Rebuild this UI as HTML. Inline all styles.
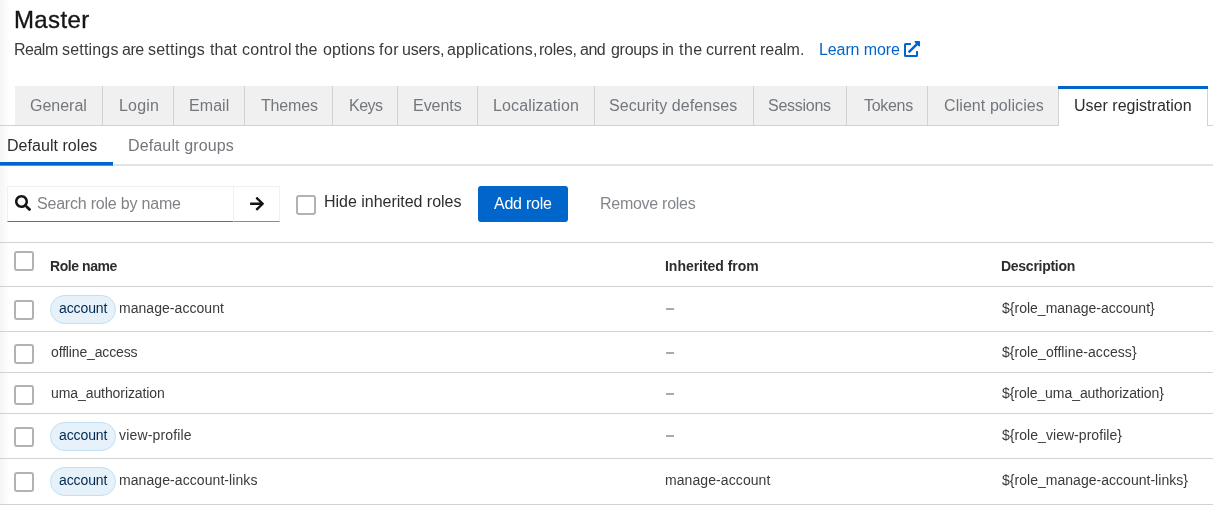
<!DOCTYPE html>
<html><head><meta charset="utf-8"><style>
html,body{margin:0;padding:0;width:1213px;height:505px;overflow:hidden;background:#fff;position:relative}
.t{position:absolute;font-family:"Liberation Sans", sans-serif;line-height:1;white-space:pre;will-change:transform}
.b{position:absolute}
</style></head><body>

<div class="b" style="left:0px;top:0px;width:10px;height:505px;background:linear-gradient(to right,rgba(0,0,0,0.04),rgba(0,0,0,0))"></div>
<div class="t" style="left:14.02px;top:7.58px;font-size:24px;color:#151515;font-weight:400;letter-spacing:0.356px;-webkit-text-stroke:0.35px #151515">Master</div>
<div class="t" style="left:14.10px;top:42.06px;font-size:16px;color:#3a3a3a;font-weight:400;letter-spacing:-0.500px;">Realm</div>
<div class="t" style="left:62.01px;top:42.06px;font-size:16px;color:#3a3a3a;font-weight:400;letter-spacing:0.184px;">settings</div>
<div class="t" style="left:122.17px;top:42.06px;font-size:16px;color:#3a3a3a;font-weight:400;letter-spacing:-0.500px;">are</div>
<div class="t" style="left:148.11px;top:42.06px;font-size:16px;color:#3a3a3a;font-weight:400;letter-spacing:0.213px;">settings</div>
<div class="t" style="left:209.93px;top:42.06px;font-size:16px;color:#3a3a3a;font-weight:400;letter-spacing:0.056px;">that</div>
<div class="t" style="left:242.25px;top:42.06px;font-size:16px;color:#3a3a3a;font-weight:400;letter-spacing:0.242px;">control</div>
<div class="t" style="left:295.33px;top:42.06px;font-size:16px;color:#3a3a3a;font-weight:400;letter-spacing:0.094px;">the</div>
<div class="t" style="left:322.65px;top:42.06px;font-size:16px;color:#3a3a3a;font-weight:400;letter-spacing:0.059px;">options</div>
<div class="t" style="left:378.65px;top:42.06px;font-size:16px;color:#3a3a3a;font-weight:400;letter-spacing:0.433px;">for</div>
<div class="t" style="left:402.30px;top:42.06px;font-size:16px;color:#3a3a3a;font-weight:400;letter-spacing:-0.248px;">users,</div>
<div class="t" style="left:447.42px;top:42.06px;font-size:16px;color:#3a3a3a;font-weight:400;letter-spacing:0.123px;">applications,</div>
<div class="t" style="left:538.80px;top:42.06px;font-size:16px;color:#3a3a3a;font-weight:400;letter-spacing:-0.240px;">roles,</div>
<div class="t" style="left:579.71px;top:42.06px;font-size:16px;color:#3a3a3a;font-weight:400;letter-spacing:-0.500px;">and</div>
<div class="t" style="left:610.69px;top:42.06px;font-size:16px;color:#3a3a3a;font-weight:400;letter-spacing:-0.298px;">groups</div>
<div class="t" style="left:662.15px;top:42.06px;font-size:16px;color:#3a3a3a;font-weight:400;letter-spacing:-0.500px;">in</div>
<div class="t" style="left:678.53px;top:42.06px;font-size:16px;color:#3a3a3a;font-weight:400;letter-spacing:0.444px;">the</div>
<div class="t" style="left:705.75px;top:42.06px;font-size:16px;color:#3a3a3a;font-weight:400;letter-spacing:0.009px;">current</div>
<div class="t" style="left:759.70px;top:42.06px;font-size:16px;color:#3a3a3a;font-weight:400;letter-spacing:-0.020px;">realm.</div>
<div class="t" style="left:818.60px;top:42.46px;font-size:16px;color:#06c;font-weight:400;letter-spacing:-0.100px;">Learn more</div>
<svg class="b" style="left:904px;top:41px" width="16" height="16" viewBox="0 0 512 512"><path fill="#06c" d="M432 320h-32a16 16 0 0 0-16 16v112H64V128h144a16 16 0 0 0 16-16V80a16 16 0 0 0-16-16H48A48 48 0 0 0 0 112v352a48 48 0 0 0 48 48h352a48 48 0 0 0 48-48V336a16 16 0 0 0-16-16zM488 0H360c-21.37 0-32.05 25.91-17 41l35.73 35.73L135 320.37a24 24 0 0 0 0 34L157.67 377a24 24 0 0 0 34 0l243.61-243.68L471 169c15 15 41 4.5 41-17V24a24 24 0 0 0-24-24z"/></svg>
<div class="b" style="left:0px;top:125px;width:1213px;height:1px;background:#d2d2d2"></div>
<div class="b" style="left:15px;top:86px;width:87px;height:39px;background:#f0f0f0"></div>
<div class="t" style="left:30.11px;top:97.96px;font-size:16px;color:#73777c;font-weight:400;letter-spacing:-0.018px;">General</div>
<div class="b" style="left:102px;top:86px;width:71px;height:39px;background:#f0f0f0"></div>
<div class="b" style="left:102px;top:86px;width:1px;height:39px;background:#d2d2d2"></div>
<div class="t" style="left:118.50px;top:97.96px;font-size:16px;color:#73777c;font-weight:400;letter-spacing:0.176px;">Login</div>
<div class="b" style="left:173px;top:86px;width:71px;height:39px;background:#f0f0f0"></div>
<div class="b" style="left:173px;top:86px;width:1px;height:39px;background:#d2d2d2"></div>
<div class="t" style="left:189.30px;top:97.96px;font-size:16px;color:#73777c;font-weight:400;letter-spacing:0.075px;">Email</div>
<div class="b" style="left:244px;top:86px;width:88px;height:39px;background:#f0f0f0"></div>
<div class="b" style="left:244px;top:86px;width:1px;height:39px;background:#d2d2d2"></div>
<div class="t" style="left:261.39px;top:97.96px;font-size:16px;color:#73777c;font-weight:400;letter-spacing:-0.178px;">Themes</div>
<div class="b" style="left:332px;top:86px;width:65px;height:39px;background:#f0f0f0"></div>
<div class="b" style="left:332px;top:86px;width:1px;height:39px;background:#d2d2d2"></div>
<div class="t" style="left:349.10px;top:97.96px;font-size:16px;color:#73777c;font-weight:400;letter-spacing:-0.500px;">Keys</div>
<div class="b" style="left:397px;top:86px;width:80px;height:39px;background:#f0f0f0"></div>
<div class="b" style="left:397px;top:86px;width:1px;height:39px;background:#d2d2d2"></div>
<div class="t" style="left:413.00px;top:97.96px;font-size:16px;color:#73777c;font-weight:400;letter-spacing:-0.041px;">Events</div>
<div class="b" style="left:477px;top:86px;width:117px;height:39px;background:#f0f0f0"></div>
<div class="b" style="left:477px;top:86px;width:1px;height:39px;background:#d2d2d2"></div>
<div class="t" style="left:492.70px;top:97.96px;font-size:16px;color:#73777c;font-weight:400;letter-spacing:0.136px;">Localization</div>
<div class="b" style="left:594px;top:86px;width:159px;height:39px;background:#f0f0f0"></div>
<div class="b" style="left:594px;top:86px;width:1px;height:39px;background:#d2d2d2"></div>
<div class="t" style="left:609.10px;top:97.96px;font-size:16px;color:#73777c;font-weight:400;letter-spacing:0.062px;">Security defenses</div>
<div class="b" style="left:753px;top:86px;width:93px;height:39px;background:#f0f0f0"></div>
<div class="b" style="left:753px;top:86px;width:1px;height:39px;background:#d2d2d2"></div>
<div class="t" style="left:768.10px;top:97.96px;font-size:16px;color:#73777c;font-weight:400;letter-spacing:-0.258px;">Sessions</div>
<div class="b" style="left:846px;top:86px;width:81px;height:39px;background:#f0f0f0"></div>
<div class="b" style="left:846px;top:86px;width:1px;height:39px;background:#d2d2d2"></div>
<div class="t" style="left:863.79px;top:97.96px;font-size:16px;color:#73777c;font-weight:400;letter-spacing:-0.298px;">Tokens</div>
<div class="b" style="left:927px;top:86px;width:131px;height:39px;background:#f0f0f0"></div>
<div class="b" style="left:927px;top:86px;width:1px;height:39px;background:#d2d2d2"></div>
<div class="t" style="left:943.90px;top:97.96px;font-size:16px;color:#73777c;font-weight:400;letter-spacing:0.078px;">Client policies</div>
<div class="b" style="left:1058px;top:86px;width:1px;height:40px;background:#d2d2d2"></div>
<div class="b" style="left:1059px;top:86px;width:149px;height:40px;background:#fff;border-right:1px solid #d2d2d2;box-sizing:border-box"></div>
<div class="b" style="left:1058px;top:86px;width:150px;height:3px;background:#06c"></div>
<div class="t" style="left:1074.20px;top:97.96px;font-size:16px;color:#2d2d2d;font-weight:400;letter-spacing:0.019px;">User registration</div>
<div class="b" style="left:0px;top:164px;width:1213px;height:2px;background:#e3e3e3"></div>
<div class="b" style="left:0px;top:162px;width:113px;height:3px;background:#06c"></div>
<div class="b" style="left:0px;top:165px;width:113px;height:1px;background:#4d94db"></div>
<div class="t" style="left:6.50px;top:137.96px;font-size:16px;color:#2d2d2d;font-weight:400;letter-spacing:0.042px;">Default roles</div>
<div class="t" style="left:127.60px;top:137.96px;font-size:16px;color:#73777c;font-weight:400;letter-spacing:0.138px;">Default groups</div>
<div class="b" style="left:7px;top:186px;width:226px;height:36px;border:1px solid #f0f0f0;border-right:0;border-bottom:1px solid #2a7fd4;box-sizing:border-box"></div>
<div class="b" style="left:233px;top:186px;width:47px;height:36px;border:1px solid #f0f0f0;border-bottom:1px solid #8a8d90;box-sizing:border-box"></div>
<svg class="b" style="left:14.6px;top:195.4px" width="16" height="16" viewBox="0 0 512 512"><path fill="#151515" d="M505 442.7L405.3 343c-4.5-4.5-10.6-7-17-7H372c27.6-35.3 44-79.7 44-128C416 93.1 322.9 0 208 0S0 93.1 0 208s93.1 208 208 208c48.3 0 92.7-16.4 128-44v16.3c0 6.4 2.5 12.5 7 17l99.7 99.7c9.4 9.4 24.6 9.4 33.9 0l28.3-28.3c9.4-9.4 9.4-24.6.1-34zM208 336c-70.7 0-128-57.2-128-128 0-70.7 57.2-128 128-128 70.7 0 128 57.2 128 128 0 70.7-57.2 128-128 128z"/></svg>
<div class="t" style="left:37.30px;top:196.06px;font-size:16px;color:#7f8387;font-weight:400;letter-spacing:-0.206px;">Search role by name</div>
<svg class="b" style="left:249px;top:196.5px" width="16" height="14" viewBox="0 0 448 448"><path fill="#151515" d="M190.5 26.6l22.2-22.2c9.4-9.4 24.6-9.4 33.9 0L441 198.7c9.4 9.4 9.4 24.6 0 33.9L246.6 427.1c-9.4 9.4-24.6 9.4-33.9 0l-22.2-22.2c-9.5-9.5-9.3-25 .4-34.3L311.4 256H24c-13.3 0-24-10.7-24-24v-32c0-13.3 10.7-24 24-24h287.4L190.9 60.9c-9.8-9.3-10-24.8-.4-34.3z"/></svg>
<div class="b" style="left:296px;top:195px;width:20px;height:20px;border:2px solid #b2b2b2;border-radius:3px;box-sizing:border-box;background:#fff"></div>
<div class="t" style="left:324.00px;top:193.96px;font-size:16px;color:#2d2d2d;font-weight:400;letter-spacing:-0.021px;">Hide inherited roles</div>
<div class="b" style="left:478px;top:186px;width:90px;height:36px;background:#06c;border-radius:3px"></div>
<div class="t" style="left:494.00px;top:196.46px;font-size:16px;color:#fff;font-weight:400;letter-spacing:-0.243px;">Add role</div>
<div class="t" style="left:599.60px;top:196.46px;font-size:16px;color:#83878b;font-weight:400;letter-spacing:-0.273px;">Remove roles</div>
<div class="b" style="left:0px;top:242px;width:1213px;height:1px;background:#d2d2d2"></div>
<div class="b" style="left:0px;top:286px;width:1213px;height:1px;background:#d2d2d2"></div>
<div class="b" style="left:0px;top:331px;width:1213px;height:1px;background:#d2d2d2"></div>
<div class="b" style="left:0px;top:372px;width:1213px;height:1px;background:#d2d2d2"></div>
<div class="b" style="left:0px;top:413px;width:1213px;height:1px;background:#d2d2d2"></div>
<div class="b" style="left:0px;top:458px;width:1213px;height:1px;background:#d2d2d2"></div>
<div class="b" style="left:0px;top:504px;width:1213px;height:1px;background:#d2d2d2"></div>
<div class="b" style="left:14px;top:251px;width:20px;height:20px;border:2px solid #b2b2b2;border-radius:3px;box-sizing:border-box;background:#fff"></div>
<div class="t" style="left:50.43px;top:259.05px;font-size:14px;color:#2d2d2d;font-weight:700;letter-spacing:-0.431px;">Role name</div>
<div class="t" style="left:665.39px;top:259.05px;font-size:14px;color:#2d2d2d;font-weight:700;letter-spacing:-0.030px;">Inherited from</div>
<div class="t" style="left:1001.23px;top:259.05px;font-size:14px;color:#2d2d2d;font-weight:700;letter-spacing:-0.273px;">Description</div>
<div class="b" style="left:14px;top:300px;width:20px;height:20px;border:2px solid #b2b2b2;border-radius:3px;box-sizing:border-box;background:#fff"></div>
<div class="b" style="left:50px;top:294.9px;width:66px;height:29px;background:#e7f1fa;border:1px solid #bee1f4;border-radius:15px;box-sizing:border-box"></div>
<div class="t" style="left:58.60px;top:300.85px;font-size:14px;color:#002952;font-weight:400;letter-spacing:-0.100px;">account</div>
<div class="t" style="left:118.56px;top:300.85px;font-size:14px;color:#3a3a3a;font-weight:400;letter-spacing:0.045px;">manage-account</div>
<div class="b" style="left:666px;top:308px;width:8px;height:2px;background:#ababab"></div>
<div class="t" style="left:1001.60px;top:300.85px;font-size:14px;color:#3a3a3a;font-weight:400;letter-spacing:0.007px;">${role_manage-account}</div>
<div class="b" style="left:14px;top:344px;width:20px;height:20px;border:2px solid #b2b2b2;border-radius:3px;box-sizing:border-box;background:#fff"></div>
<div class="t" style="left:51.00px;top:345.15px;font-size:14px;color:#3a3a3a;font-weight:400;letter-spacing:-0.146px;">offline_access</div>
<div class="b" style="left:666px;top:352px;width:8px;height:2px;background:#ababab"></div>
<div class="t" style="left:1001.70px;top:345.15px;font-size:14px;color:#3a3a3a;font-weight:400;letter-spacing:0.045px;">${role_offline-access}</div>
<div class="b" style="left:14px;top:385px;width:20px;height:20px;border:2px solid #b2b2b2;border-radius:3px;box-sizing:border-box;background:#fff"></div>
<div class="t" style="left:50.53px;top:385.95px;font-size:14px;color:#3a3a3a;font-weight:400;letter-spacing:-0.083px;">uma_authorization</div>
<div class="b" style="left:666px;top:393px;width:8px;height:2px;background:#ababab"></div>
<div class="t" style="left:1001.70px;top:385.95px;font-size:14px;color:#3a3a3a;font-weight:400;letter-spacing:-0.067px;">${role_uma_authorization}</div>
<div class="b" style="left:14px;top:427px;width:20px;height:20px;border:2px solid #b2b2b2;border-radius:3px;box-sizing:border-box;background:#fff"></div>
<div class="b" style="left:50px;top:422px;width:66px;height:29px;background:#e7f1fa;border:1px solid #bee1f4;border-radius:15px;box-sizing:border-box"></div>
<div class="t" style="left:58.60px;top:427.95px;font-size:14px;color:#002952;font-weight:400;letter-spacing:-0.100px;">account</div>
<div class="t" style="left:119.30px;top:427.95px;font-size:14px;color:#3a3a3a;font-weight:400;letter-spacing:0.164px;">view-profile</div>
<div class="b" style="left:666px;top:435px;width:8px;height:2px;background:#ababab"></div>
<div class="t" style="left:1001.70px;top:427.95px;font-size:14px;color:#3a3a3a;font-weight:400;letter-spacing:0.047px;">${role_view-profile}</div>
<div class="b" style="left:14px;top:472px;width:20px;height:20px;border:2px solid #b2b2b2;border-radius:3px;box-sizing:border-box;background:#fff"></div>
<div class="b" style="left:50px;top:467.2px;width:66px;height:29px;background:#e7f1fa;border:1px solid #bee1f4;border-radius:15px;box-sizing:border-box"></div>
<div class="t" style="left:58.60px;top:473.45px;font-size:14px;color:#002952;font-weight:400;letter-spacing:-0.100px;">account</div>
<div class="t" style="left:118.56px;top:473.45px;font-size:14px;color:#3a3a3a;font-weight:400;letter-spacing:0.076px;">manage-account-links</div>
<div class="t" style="left:665.26px;top:473.45px;font-size:14px;color:#3a3a3a;font-weight:400;letter-spacing:0.084px;">manage-account</div>
<div class="t" style="left:1001.70px;top:473.45px;font-size:14px;color:#3a3a3a;font-weight:400;letter-spacing:0.026px;">${role_manage-account-links}</div>
</body></html>
